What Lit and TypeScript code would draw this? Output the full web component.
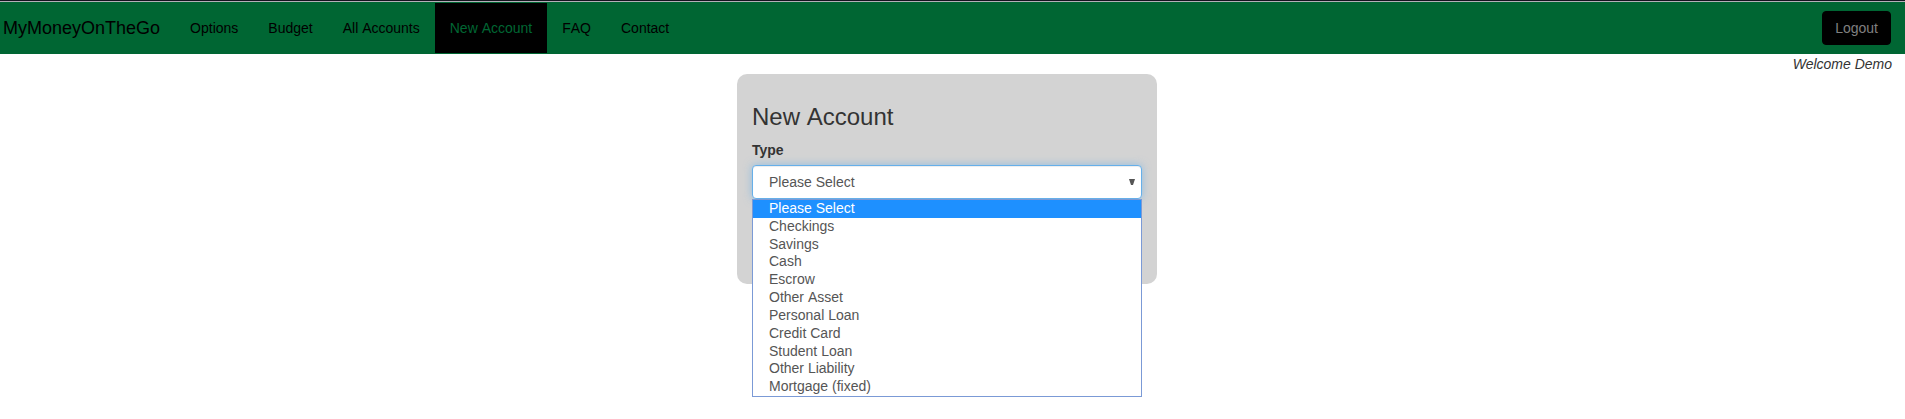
import { LitElement, html, css } from "lit";
import { customElement, property, state } from "lit/decorators.js";
import { classMap } from "lit/directives/class-map.js";

const NAV_ITEMS = ["Options", "Budget", "All Accounts", "New Account", "FAQ", "Contact"];

const ACCOUNT_TYPES = [
  "Please Select",
  "Checkings",
  "Savings",
  "Cash",
  "Escrow",
  "Other Asset",
  "Personal Loan",
  "Credit Card",
  "Student Loan",
  "Other Liability",
  "Mortgage (fixed)",
];

@customElement("site-nav")
export class SiteNav extends LitElement {
  @property() active = "";

  static styles = css`
    :host {
      display: block;
    }
    .navbar {
      display: flex;
      align-items: center;
      border: 1px solid #006633;
      border-width: 1px 0;
      background: #006633;
      padding: 0 14px 0 3px;
    }
    .brand {
      padding: 15px 15px 15px 0;
      font-size: 18px;
      line-height: 20px;
      color: #000;
      text-decoration: none;
    }
    .links {
      display: flex;
      flex: 1;
      margin: 0;
      padding: 0;
      list-style: none;
      font-kerning: none;
    }
    .link {
      display: block;
      padding: 15px;
      color: #000;
      text-decoration: none;
    }
    .link.active {
      background: #000;
      color: #006633;
    }
    .logout {
      padding: 6px 12px;
      border: 1px solid #000;
      border-radius: 4px;
      background: #000;
      color: #808080;
      font: inherit;
      cursor: pointer;
    }
  `;

  render() {
    return html`
      <nav class="navbar">
        <a class="brand" href="#">MyMoneyOnTheGo</a>
        <ul class="links">
          ${NAV_ITEMS.map(
            (item) => html`<li>
              <a class=${classMap({ link: true, active: item === this.active })} href="#">${item}</a>
            </li>`
          )}
        </ul>
        <button class="logout" type="button">Logout</button>
      </nav>
    `;
  }
}

@customElement("account-form")
export class AccountForm extends LitElement {
  @state() private selected = ACCOUNT_TYPES[0];
  @state() private open = true;

  static styles = css`
    :host {
      display: block;
    }
    .card {
      box-sizing: border-box;
      max-width: 420px;
      margin: 0 auto;
      padding: 10px 15px 85px;
      border-radius: 10px;
      background: #d3d3d3;
    }
    .title {
      margin: 20px 0 10px;
      font-size: 24px;
      font-weight: 500;
      line-height: 26px;
      font-kerning: none;
    }
    .label {
      display: block;
      margin-bottom: 5px;
      font-weight: 700;
    }
    .field {
      position: relative;
    }
    .select {
      display: block;
      box-sizing: border-box;
      width: 100%;
      height: 34px;
      margin: 0;
      padding: 6px 16px;
      border: 1px solid #66afe9;
      border-radius: 4px;
      outline: 0;
      appearance: none;
      background: #fff;
      box-shadow: inset 0 1px 1px rgba(0, 0, 0, 0.075), 0 0 8px rgba(102, 175, 233, 0.6);
      color: #555;
      font: inherit;
    }
    .arrow {
      position: absolute;
      top: 14px;
      right: 7px;
      width: 6px;
      height: 6px;
      fill: #555;
      pointer-events: none;
    }
    .menu {
      position: absolute;
      top: 100%;
      left: 0;
      right: 0;
      display: grid;
      grid-auto-rows: 1fr;
      box-sizing: border-box;
      height: 198px;
      margin: 0;
      padding: 0;
      border: 1px solid #7b9ad6;
      background: #fff;
      color: #555;
      line-height: 16px;
      list-style: none;
      font-kerning: none;
    }
    .option {
      padding: 0 16px;
      cursor: default;
    }
    .option.current {
      background: #1e90ff;
      color: #fff;
    }
  `;

  private choose(type: string) {
    this.selected = type;
    this.open = false;
  }

  private toggle(event: Event) {
    event.preventDefault();
    this.open = !this.open;
  }

  render() {
    return html`
      <form class="card">
        <h3 class="title">New Account</h3>
        <label class="label" for="type">Type</label>
        <div class="field">
          <select id="type" class="select" .value=${this.selected} @mousedown=${this.toggle}>
            ${ACCOUNT_TYPES.map(
              (type) => html`<option value=${type} ?selected=${type === this.selected}>${type}</option>`
            )}
          </select>
          <svg class="arrow" viewBox="0 0 6 6" aria-hidden="true"><path d="M0 0H6L4 6H2Z" /></svg>
          ${this.open
            ? html`<ul class="menu" role="listbox" aria-label="Type">
                ${ACCOUNT_TYPES.map(
                  (type) => html`<li
                    class=${classMap({ option: true, current: type === this.selected })}
                    role="option"
                    aria-selected=${type === this.selected}
                    @click=${() => this.choose(type)}
                  >${type}</li>`
                )}
              </ul>`
            : null}
        </div>
      </form>
    `;
  }
}

@customElement("app-root")
export class AppRoot extends LitElement {
  static styles = css`
    :host {
      display: block;
      min-height: 100vh;
      border-top: 1px solid #14141f;
      box-sizing: border-box;
      background: #fff;
      color: #333;
      font-family: "Liberation Sans", Arial, sans-serif;
      font-size: 14px;
      line-height: 20px;
    }
    .page {
      border-top: 1px solid #b4b0b8;
    }
    .content {
      padding-right: 11px;
    }
    .welcome {
      margin: 0;
      padding-right: 2px;
      font-style: italic;
      text-align: right;
    }
  `;

  render() {
    return html`
      <div class="page">
        <site-nav active="New Account"></site-nav>
        <main class="content">
          <p class="welcome">Welcome Demo</p>
          <account-form></account-form>
        </main>
      </div>
    `;
  }
}
